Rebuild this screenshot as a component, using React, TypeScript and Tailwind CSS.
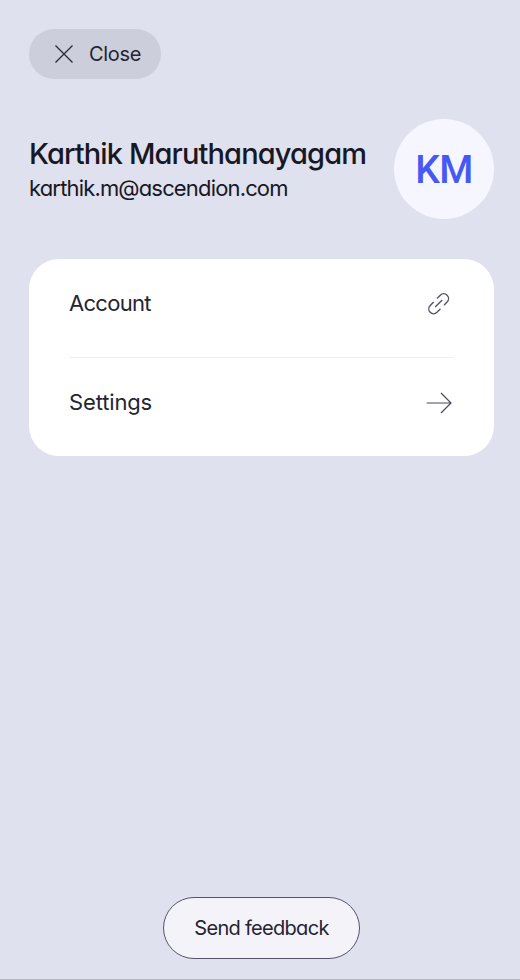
export default function App() {
  return (
    <main className="flex h-[980px] w-[520px] flex-col border-b border-[#b9b9bd] bg-[#dfe1ee] pt-[29px] pr-[26px] pb-5 pl-[29px] font-['Inter','Liberation_Sans',sans-serif] text-[#242432] [font-feature-settings:'cv11']">
      <button className="flex h-[50px] w-[132px] shrink-0 items-center rounded-full bg-[#cdcedb] pl-[26px]">
        <svg className="h-[18px] w-[18px] shrink-0" viewBox="0 0 18 18" fill="none" stroke="#292938" strokeWidth="1.25">
          <path d="M0.5 0.5 17.5 17.5M17.5 0.5 0.5 17.5" />
        </svg>
        <span className="ml-4 text-[20px] leading-6 tracking-[-0.3px]">Close</span>
      </button>

      <header className="mt-10 flex h-[100px] shrink-0 items-center justify-between">
        <div className="pt-0.5 whitespace-nowrap">
          <h1 className="text-[29px] leading-9 font-medium tracking-[-0.88px] text-[#181824]">Karthik Maruthanayagam</h1>
          <p className="text-[22px] leading-8 tracking-[-0.84px] text-[#181824]">karthik.m@ascendion.com</p>
        </div>
        <div className="flex h-[100px] w-[100px] shrink-0 items-center justify-center rounded-full bg-[#f5f6ff] pt-[3px] font-['Roboto',sans-serif] text-[39px] leading-none font-medium tracking-[-0.5px] text-[#4759f5]">
          KM
        </div>
      </header>

      <section className="mt-10 flex h-[197px] shrink-0 flex-col rounded-[30px] bg-white px-10">
        <a className="flex h-[98px] items-center justify-between pb-2">
          <span className="pb-0.5 text-[22px] leading-7 tracking-[-0.7px]">Account</span>
          <svg className="mr-[4px] h-[22px] w-[22px]" viewBox="0 0 22 22" fill="none" stroke="#55536a" strokeWidth="1.4">
            <path d="M9 5.5 12.3 2.2a4.75 4.75 0 0 1 6.8 6.8L16 12.2M5.7 9 2.2 12.5a4.75 4.75 0 0 0 6.8 6.8L12.5 15.8M7.2 14 14.2 7" />
          </svg>
        </a>
        <div className="h-px w-[384px] shrink-0 bg-[#eeeef5]" />
        <a className="flex h-[98px] items-center justify-between pb-2">
          <span className="pb-0.5 text-[22px] leading-7 tracking-[-0.15px]">Settings</span>
          <svg className="mr-[2px] h-[22px] w-[26px]" viewBox="0 0 26 22" fill="none" stroke="#49475e" strokeWidth="1.2">
            <path d="M0.7 11H25M15 1 25 11 15 21" />
          </svg>
        </a>
      </section>

      <button className="mt-auto ml-[134px] flex h-[62px] w-[197px] shrink-0 items-center justify-center rounded-full border border-[#55536a] bg-[#f3f3f9] text-[20px] tracking-[-0.7px]">
        Send feedback
      </button>
    </main>
  );
}
